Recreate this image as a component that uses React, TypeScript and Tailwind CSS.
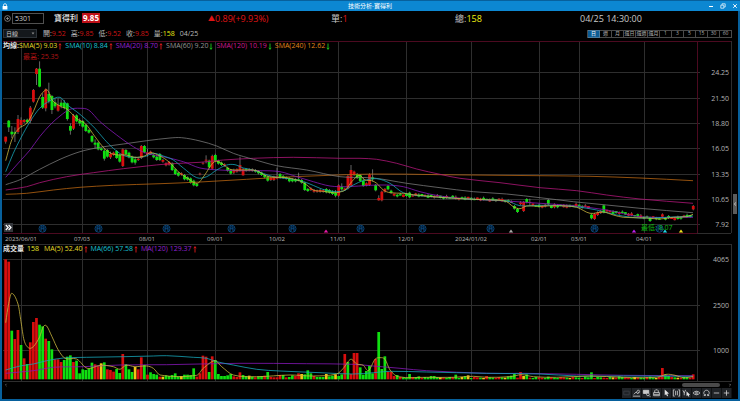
// App.tsx

import React from "react";

type Pt = [number, number];
// direction, body top, body bottom, high, low (chart units)
type Candle = ["r" | "g", number, number, number?, number?];

// one chart unit is a third of a pixel
const STEP = 9.25;
const COUNT = 224;
const PRICE_TOP = 40;
const VOLUME_TOP = 240;

const barX = (i: number) => (17 + STEP * i) / 3;

const GREEN = "#10e010";
const RED = "#d80e0e";
const YELLOW = "#f4c414";

const MONTHS = [
  { x: 21, label: "2023/06/01" },
  { x: 82, label: "07/03" },
  { x: 147, label: "08/01" },
  { x: 215, label: "09/01" },
  { x: 277, label: "10/02" },
  { x: 338, label: "11/01" },
  { x: 406, label: "12/01" },
  { x: 471, label: "2024/01/02" },
  { x: 539, label: "02/01" },
  { x: 579, label: "03/01" },
  { x: 644, label: "04/01" },
];

const PRICES = [
  { y: 72, label: "24.25" },
  { y: 98, label: "21.50" },
  { y: 123, label: "18.80" },
  { y: 148, label: "16.05" },
  { y: 174, label: "13.35" },
  { y: 199, label: "10.65" },
  { y: 224, label: "7.92" },
];

const VOLUMES = [
  { y: 259, label: "4065" },
  { y: 305, label: "2500" },
  { y: 350, label: "1000" },
];

const CANDLES: Candle[] = [
  ["r", 290, 305, 290, 311], ["g", 242, 262, 240, 276], ["g", 275, 283, 258, 294], ["g", 277, 281, 262, 306],
  ["r", 237, 276, 225, 282], ["r", 240, 255, 232, 262], ["r", 240, 246], ["g", 239, 247],
  ["r", 203, 243, 198, 250], ["r", 150, 185], ["r", 86, 102, 84, 135], ["g", 86, 140, 64, 142],
  ["g", 171, 203, 160, 207], ["r", 148, 205, 145, 214], ["g", 162, 184, 128, 190], ["g", 168, 210, 165, 222],
  ["g", 187, 199, 175, 205], ["r", 195, 212, 175, 215], ["g", 188, 198, 178, 205], ["g", 188, 204, 180, 208],
  ["g", 190, 237, 188, 242], ["g", 258, 272, 250, 284], ["r", 226, 266, 222, 270], ["g", 226, 244],
  ["g", 242, 250, 235, 258], ["g", 243, 260], ["g", 255, 273], ["g", 270, 278],
  ["g", 288, 305], ["g", 308, 314, 298, 326], ["g", 308, 328], ["g", 325, 330],
  ["g", 332, 356, 325, 362], ["g", 330, 350], ["r", 342, 352, 335, 357], ["r", 338, 344],
  ["g", 333, 354], ["g", 345, 365], ["r", 328, 378], ["g", 330, 343],
  ["g", 338, 352], ["g", 350, 367], ["g", 358, 368, 350, 374], ["r", 356, 360],
  ["r", 318, 354], ["g", 318, 337], ["r", 337, 343, 326, 350], ["r", 335, 342],
  ["g", 345, 352], ["g", 350, 360], ["g", 342, 360], ["r", 360, 365],
  ["r", 370, 376], ["r", 366, 374], ["g", 370, 390], ["g", 388, 402],
  ["g", 398, 407], ["r", 400, 404], ["g", 405, 418], ["g", 412, 419],
  ["g", 415, 428], ["g", 422, 436], ["g", 432, 438], ["r", 401, 403],
  ["r", 369, 371], ["r", 359, 362, 346, 370], ["g", 362, 382], ["r", 348, 386, 344, 388],
  ["g", 345, 363, 341, 364], ["g", 362, 371], ["g", 368, 375], ["r", 373, 377],
  ["g", 383, 392], ["g", 390, 401], ["r", 392, 398, 386, 402], ["r", 388, 395],
  ["r", 375, 392, 350, 395], ["r", 388, 406, 384, 407], ["g", 388, 392], ["r", 388, 391],
  ["r", 388, 392], ["g", 390, 395], ["g", 393, 400], ["g", 398, 405],
  ["g", 405, 412], ["g", 410, 422], ["r", 413, 420], ["r", 410, 420],
  ["r", 409, 416, 383, 418], ["g", 402, 413], ["g", 408, 414], ["g", 412, 416],
  ["g", 415, 424], ["g", 418, 424], ["g", 418, 424], ["g", 418, 422, 398, 424],
  ["g", 420, 428], ["g", 428, 450], ["g", 447, 453], ["r", 445, 450],
  ["r", 450, 455], ["r", 452, 455], ["r", 450, 455], ["r", 451, 455],
  ["g", 447, 457], ["g", 450, 458], ["g", 454, 462], ["g", 458, 467, 450, 472],
  ["r", 436, 467], ["g", 440, 448, 430, 452], ["r", 446, 450], ["r", 408, 445],
  ["r", 390, 437, 375, 440], ["r", 395, 405], ["g", 402, 414], ["g", 405, 423],
  ["g", 422, 438, 415, 440], ["r", 430, 436], ["r", 403, 435], ["g", 412, 418, 388, 424],
  ["g", 435, 451], ["r", 474, 481, 466, 482], ["r", 455, 481], ["r", 447, 455],
  ["g", 438, 448], ["g", 452, 458],
];

// quiet stretch: closes drift along this path with small bodies
const DRIFT: Pt[] = [
  [126, 464], [130, 467], [133, 465], [140, 470], [147, 474], [155, 478], [162, 481], [164, 486],
  [170, 490], [173, 499], [182, 498], [186, 497], [190, 502], [195, 514], [201, 520], [205, 528],
  [211, 535], [218, 535], [222, 526], [223, 522],
];

const SPECIAL: Record<number, Candle> = {
  131: ["g", 458, 472],
  165: ["g", 498, 506],
  166: ["g", 507, 516],
  168: ["r", 486, 513],
  169: ["g", 477, 487],
  170: ["r", 486, 488, 476, 496],
  176: ["g", 480, 493],
  178: ["r", 493, 502],
  190: ["g", 524, 535],
  191: ["r", 522, 537],
  192: ["r", 517, 525],
  193: ["r", 513, 519],
  194: ["g", 496, 518, 494, 520],
  209: ["g", 533, 543],
  213: ["r", 523, 530],
  215: ["g", 528, 534],
  223: ["r", 498, 508],
};

function lerp(points: Pt[], x: number) {
  for (let i = 1; i < points.length; i++) {
    const [x0, y0] = points[i - 1];
    const [x1, y1] = points[i];
    if (x <= x1) return y0 + ((y1 - y0) * (x - x0)) / (x1 - x0);
  }
  return points[points.length - 1][1];
}

const ALL_CANDLES: Candle[] = Array.from({ length: COUNT }, (_, i) => {
  if (SPECIAL[i]) return SPECIAL[i];
  if (CANDLES[i]) return CANDLES[i];
  const mid = lerp(DRIFT, i) + ((i * 7) % 5) - 2;
  const half = 2 + ((i * 3) % 4) / 2;
  return [(i * 5) % 7 < 3 ? "r" : "g", mid - half, mid + half, mid - half - (i % 3) * 2, mid + half + (i % 4)];
});

// colour and bar top (chart units, base at 418)
const VOLUME_HEAD =
  "r58 r65 g272 r297 r270 g315 r355 g372 r307 r246 r234 g254 g259 r296 g303 g328 " +
  "r358 r358 r366 g360 g350 g346 r366 g362 g400 g388 g390 g386 g368 r373 r378 y370 " +
  "g367 r388 r390 r395 g387 g399 r342 g372 g388 g396 y381 r388 r352 g375 r404 g397 " +
  "g402 g404 r410 y410 g406 g408 g405 g400 g409 y408 g404 g404 g405 g385 r410 r400 " +
  "r347 r350 g396 r349 g360 g402 g408 g408 g406 g402 r409 r411 r397 g405 g408 y407 " +
  "g410 r412 g409 g408 r407 g396 r411 r412 r412 r405 g405 r412 g411 g406 r408 r400 " +
  "y402 g403 g391 g400 r408 g411 g411 g411 y402 g409 g407 y403 g408 g403 r342 g366 " +
  "r402 r339 r339 g382 g404 g393 g377 g400 r357 g276 g387 g349 r395 r396 r408 g405 g410";

const VOLUME_SPECIAL: Record<number, string> = {
  131: "g402", 134: "g409", 138: "g408", 139: "g408", 146: "g404", 149: "g408", 150: "y406",
  156: "r408", 163: "g409", 164: "g407", 165: "g402", 167: "r396", 168: "y408", 169: "g403",
  176: "g410", 188: "g410", 190: "g397", 199: "g409", 209: "g410", 213: "r384", 214: "g403",
  215: "g408", 223: "r403",
};

const head = VOLUME_HEAD.split(" ");
const BARS = Array.from({ length: COUNT }, (_, i) => {
  const raw =
    VOLUME_SPECIAL[i] ??
    (i < 128 ? head[i] : undefined) ??
    `${"grgyrgr"[(i * 3) % 7]}${411 + ((i * 5) % 4)}`;
  return { color: raw[0], top: Number(raw.slice(1)) };
});

const PRICE_LINES: { color: string; points: Pt[] }[] = [
  {
    color: "#b86412",
    points: [[17, 463], [80, 460], [160, 450], [240, 442], [340, 436], [480, 431], [600, 426], [740, 418], [840, 412], [960, 407], [1120, 402], [1320, 404], [1620, 407], [1770, 409], [1920, 414], [2079, 422]],
  },
  {
    color: "#b01678",
    points: [[17, 450], [80, 440], [119, 428], [200, 410], [280, 398], [370, 386], [440, 378], [500, 372], [600, 367], [670, 360], [760, 355], [880, 352], [1020, 355], [1080, 355], [1130, 358], [1190, 370], [1250, 387], [1320, 403], [1380, 415], [1500, 428], [1620, 443], [1730, 452], [1820, 465], [1920, 477], [2079, 490]],
  },
  {
    color: "#777777",
    points: [[17, 434], [63, 418], [119, 388], [180, 358], [240, 335], [300, 322], [370, 312], [440, 302], [510, 294], [545, 293], [600, 303], [650, 318], [700, 340], [760, 358], [830, 377], [920, 390], [1020, 410], [1120, 414], [1220, 430], [1320, 443], [1420, 455], [1520, 462], [1620, 473], [1720, 485], [1820, 495], [1920, 505], [2079, 518]],
  },
  {
    color: "#8518b8",
    points: [[17, 412], [63, 360], [90, 330], [119, 290], [150, 255], [180, 228], [210, 208], [240, 205], [266, 210], [300, 245], [350, 285], [400, 320], [440, 340], [490, 350], [550, 365], [600, 384], [660, 390], [720, 392], [780, 392], [840, 395], [890, 410], [940, 425], [990, 438], [1040, 440], [1110, 436], [1160, 435], [1210, 440], [1260, 455], [1320, 468], [1420, 478], [1520, 483], [1620, 490], [1720, 497], [1820, 510], [1920, 530], [2079, 532]],
  },
  {
    color: "#16a4b8",
    points: [[17, 395], [40, 340], [63, 293], [90, 245], [119, 205], [150, 182], [180, 172], [202, 195], [230, 215], [257, 238], [285, 265], [313, 298], [340, 325], [368, 345], [395, 352], [433, 350], [460, 340], [490, 348], [520, 360], [550, 384], [590, 413], [620, 410], [650, 390], [680, 375], [705, 374], [730, 384], [760, 390], [820, 410], [880, 418], [920, 428], [960, 445], [990, 453], [1030, 453], [1060, 435], [1090, 422], [1130, 416], [1170, 430], [1210, 458], [1270, 468], [1420, 478], [1520, 483], [1560, 497], [1620, 496], [1680, 497], [1740, 502], [1790, 510], [1850, 525], [1920, 534], [2000, 532], [2079, 528]],
  },
  {
    color: "#c8b43c",
    points: [[17, 362], [35, 300], [54, 268], [82, 248], [100, 215], [119, 170], [137, 150], [146, 155], [156, 180], [180, 198], [202, 208], [229, 235], [257, 252], [285, 290], [313, 325], [340, 343], [378, 345], [405, 352], [433, 348], [452, 338], [480, 348], [507, 366], [535, 395], [563, 415], [592, 430], [612, 408], [642, 366], [665, 370], [690, 388], [730, 390], [770, 392], [800, 408], [830, 412], [860, 413], [900, 423], [920, 435], [940, 450], [970, 454], [1000, 458], [1020, 456], [1038, 448], [1055, 425], [1078, 406], [1095, 420], [1115, 422], [1130, 430], [1150, 450], [1170, 458], [1210, 460], [1240, 464], [1320, 472], [1420, 478], [1500, 481], [1520, 485], [1540, 500], [1560, 506], [1580, 498], [1620, 499], [1670, 497], [1730, 502], [1770, 520], [1810, 516], [1840, 525], [1870, 532], [1940, 534], [1980, 537], [2020, 532], [2060, 530], [2079, 523]],
  },
];

const VOLUME_LINES: { color: string; points: Pt[] }[] = [
  {
    color: "#8518b8",
    points: [[17, 400], [100, 392], [160, 382], [250, 380], [360, 375], [500, 374], [720, 370], [920, 371], [1060, 373], [1120, 378], [1200, 385], [1280, 392], [1460, 400], [1570, 400], [1730, 403], [1870, 406], [2079, 407]],
  },
  {
    color: "#16a4b8",
    points: [[17, 390], [60, 378], [100, 372], [140, 362], [190, 354], [260, 352], [370, 350], [460, 348], [500, 347], [580, 352], [620, 355], [650, 365], [700, 375], [770, 388], [840, 393], [960, 398], [1060, 402], [1120, 398], [1170, 394], [1280, 396], [1460, 400], [1620, 402], [1730, 408], [1870, 408], [2079, 409]],
  },
  {
    color: "#c8b43c",
    points: [[17, 248], [26, 190], [35, 160], [54, 192], [63, 245], [72, 300], [85, 323], [100, 320], [119, 290], [130, 260], [140, 258], [156, 290], [175, 330], [195, 355], [230, 357], [262, 385], [300, 376], [340, 380], [360, 388], [378, 376], [405, 380], [440, 378], [460, 385], [480, 405], [590, 406], [610, 385], [645, 362], [665, 380], [700, 405], [770, 410], [870, 405], [940, 408], [1010, 402], [1030, 385], [1052, 358], [1070, 372], [1090, 376], [1105, 392], [1125, 358], [1140, 353], [1155, 358], [1170, 390], [1195, 410], [1280, 412], [1360, 412], [1420, 409], [1460, 412], [1530, 410], [1565, 404], [1600, 410], [1670, 412], [1770, 408], [1870, 412], [1970, 412], [2000, 403], [2025, 406], [2050, 413], [2079, 410]],
  },
];

// smooth curve through all points
function curve(points: Pt[], top: number) {
  const p = points.map(([x, y]): Pt => [x / 3, top + y / 3]);
  let d = `M${p[0][0].toFixed(1)} ${p[0][1].toFixed(1)}`;
  for (let i = 0; i < p.length - 1; i++) {
    const a = p[i - 1] ?? p[i];
    const b = p[i];
    const c = p[i + 1];
    const e = p[i + 2] ?? c;
    const dx = (c[0] - b[0]) / 3;
    const s1 = c[0] === a[0] ? 0 : (c[1] - a[1]) / (c[0] - a[0]);
    const s2 = e[0] === b[0] ? 0 : (e[1] - b[1]) / (e[0] - b[0]);
    d += `C${(b[0] + dx).toFixed(1)} ${(b[1] + s1 * dx).toFixed(1)} ${(c[0] - dx).toFixed(1)} ${(
      c[1] - s2 * dx
    ).toFixed(1)} ${c[0].toFixed(1)} ${c[1].toFixed(1)}`;
  }
  return d;
}

function Lines({ lines, top }: { lines: { color: string; points: Pt[] }[]; top: number }) {
  return (
    <g fill="none" strokeWidth="0.8">
      {lines.map((l) => (
        <path key={l.color} d={curve(l.points, top)} stroke={l.color} />
      ))}
    </g>
  );
}

const MARKS = [42, 98, 166, 231, 292, 360, 422, 490, 594, 659];
const TRIANGLES = [
  { x: 326, color: "#e818a8" },
  { x: 511, color: "#aaaaaa" },
  { x: 634, color: "#c020f0" },
  { x: 665, color: "#20d8e8" },
  { x: 681, color: "#f0e020" },
];

function PriceChart() {
  return (
    <svg viewBox="2 40 736 204" className="block w-full" role="img" aria-label="寶得利 日線">
      <g stroke="#2e2e2e" shapeRendering="crispEdges">
        {PRICES.map((p) => (
          <path key={p.y} d={`M3 ${p.y + 0.5}H700`} />
        ))}
        {MONTHS.map((m) => (
          <path key={m.x} d={`M${m.x + 0.5} 41V233`} />
        ))}
        <path d="M731.5 41V233" />
        <path d="M697 233.5H731" />
      </g>
      <g stroke="#4c0a20" shapeRendering="crispEdges">
        <path d="M3 41.5H731M3 233.5H697M697.5 41V233" />
      </g>

      <g fill="none" stroke="#0b5596">
        {MARKS.map((x) => (
          <g key={x}>
            <circle cx={x + 0.5} cy="228.7" r="3.5" strokeWidth="0.8" />
            <path d={`M${x - 1} 231V226.9H${x + 2}V231M${x - 1} 228.8H${x + 2}`} strokeWidth="0.9" />
          </g>
        ))}
      </g>
      {TRIANGLES.map((t) => (
        <path key={t.x} d={`M${t.x} 229.5l2.2 3h-4.4z`} fill={t.color} />
      ))}

      {ALL_CANDLES.map(([dir, top, bottom, high, low], i) => {
        const x = barX(i);
        return (
          <g key={i}>
            <path
              d={`M${x} ${PRICE_TOP + (high ?? top - 3) / 3}V${PRICE_TOP + (low ?? bottom + 3) / 3}`}
              stroke="#909090"
              strokeWidth="0.7"
            />
            <rect
              x={x - 1.4}
              y={PRICE_TOP + top / 3}
              width="2.8"
              height={(bottom - top) / 3}
              fill={dir === "r" ? RED : GREEN}
            />
          </g>
        );
      })}
      <Lines lines={PRICE_LINES} top={PRICE_TOP} />

      <text x="23" y="59" className="fill-[#b01414] text-[7px]">
        最高: 25.35
      </text>
      <text x="641" y="230" className="fill-[#10b810] text-[7px]">
        最低: 8.07
      </text>
      {MONTHS.map((m) => (
        <text key={m.x} x={m.x} y="241" textAnchor="middle" className="fill-[#bcbcbc] text-[6px]">
          {m.label}
        </text>
      ))}
      {PRICES.map((p) => (
        <text key={p.y} x="729" y={p.y + 3} textAnchor="end" className="fill-[#b4b4b4] text-[7px]">
          {p.label}
        </text>
      ))}
    </svg>
  );
}

function VolumeChart() {
  const fills: Record<string, string> = { r: RED, g: GREEN, y: YELLOW };
  return (
    <svg viewBox="2 244 736 138" className="block w-full" role="img" aria-label="成交量">
      <g stroke="#2e2e2e" shapeRendering="crispEdges">
        <path d="M3 244.5H731M3 381.5H731M731.5 244V382M697.5 244V382" />
        {VOLUMES.map((v) => (
          <path key={v.y} d={`M3 ${v.y + 0.5}H700`} />
        ))}
        {MONTHS.map((m) => (
          <path key={m.x} d={`M${m.x + 0.5} 245V381`} />
        ))}
      </g>
      {BARS.map((b, i) => (
        <rect
          key={i}
          x={barX(i) - 1.4}
          y={VOLUME_TOP + b.top / 3}
          width="2.7"
          height={(418 - b.top) / 3}
          fill={fills[b.color]}
        />
      ))}
      <Lines lines={VOLUME_LINES} top={VOLUME_TOP} />
      {VOLUMES.map((v) => (
        <text key={v.y} x="729" y={v.y + 3} textAnchor="end" className="fill-[#b4b4b4] text-[7px]">
          {v.label}
        </text>
      ))}
    </svg>
  );
}

function Arrow({ up }: { up?: boolean }) {
  return (
    <svg viewBox="0 0 4 7" className="mr-[2px] ml-px h-[7px] w-[4px] shrink-0">
      <path
        d={up ? "M2 0.5V6.5M0.8 2.2L2 0.8L3.2 2.2" : "M2 0.5V6.5M0.8 4.8L2 6.2L3.2 4.8"}
        fill="none"
        stroke={up ? "#d01818" : "#18b818"}
        strokeWidth="1"
      />
    </svg>
  );
}

function Legend({ color, text, up }: { color: string; text: string; up?: boolean }) {
  return (
    <span className="flex items-center">
      <span className={color}>{text}</span>
      <Arrow up={up} />
    </span>
  );
}

function Quote({ name, value, color = "text-[#cc1414]" }: { name: string; value: string; color?: string }) {
  return (
    <span className="text-[#b8b8b8]">
      {name}:<span className={color}>{value}</span>
    </span>
  );
}

const PERIODS = ["日", "週", "月", "還日", "還週", "還月", "1", "3", "5", "15", "30", "60"];

const TOOLS: { name: string; icon: React.ReactNode }[] = [
  { name: "空白", icon: <path d="M2 3h6v4h-6z" stroke="#3c4046" /> },
  { name: "畫線", icon: <path d="M1 8.5h8M2 6.5L4.5 4L6 5.5L8.5 4.5M4.5 4.5L7 1.5L8.5 3L6 5.5" /> },
  {
    name: "視窗",
    icon: (
      <>
        <path d="M1.5 2h6v3.5h-6z" fill="#c8c8c8" />
        <circle cx="6.6" cy="6.6" r="1.5" fill="#202327" />
        <path d="M9.2 9.2L7.8 7.8" />
      </>
    ),
  },
  { name: "列印", icon: <path d="M3 4.5V2.5L4 1.5H6L7 2.5V4.5M1.8 4.5h6.4v3.5h-6.4zM2 6.5h6" /> },
  { name: "游標", icon: <path d="M3 1L7.8 5.5L5.8 5.8L6.8 8.2L5.6 8.7L4.6 6.4L3 7.5z" fill="#e0e0e0" stroke="none" /> },
  { name: "區間", icon: <path d="M3 1.5H1.5V8.5H3M7 1.5H8.5V8.5H7M4 2.5V7.5M6 2.5V7.5" /> },
  {
    name: "查價",
    icon: (
      <>
        <path d="M1 2L2.5 5L4 1.5M2.5 5V7.5" />
        <path d="M5 3L9 7L7.6 7.2L8.2 8.8L7 9L6.4 7.6L5 8.4z" fill="#e0e0e0" stroke="none" />
      </>
    ),
  },
  {
    name: "顯示",
    icon: (
      <>
        <path d="M1.2 5Q5 1 8.8 5Q5 9 1.2 5z" />
        <circle cx="5" cy="5" r="1" />
      </>
    ),
  },
  { name: "重設", icon: <path d="M3.6 7.6A3 3 0 1 1 6.4 7.6M2 7.8H3.8V6.2M8 7.8H6.2V6.2" /> },
  { name: "縮小", icon: <path d="M2 5H8" /> },
  { name: "放大", icon: <path d="M2 5H8M5 2V8" /> },
];

function TitleBar() {
  return (
    <header className="flex h-[11px] items-center border-t border-[#07609c] bg-[#0c87d2] px-[2px] text-white">
      <div className="flex flex-1 items-center">
        <svg viewBox="0 0 6 7" className="h-[7px] w-[6px]">
          <path d="M1.5 3.2V2.2A1.5 1.5 0 0 1 4.5 2.2V3.2" fill="none" stroke="#fff" strokeWidth="0.8" />
          <rect x="0.6" y="3" width="4.8" height="3.5" fill="#fff" />
        </svg>
      </div>
      <h1 className="text-[6px] leading-none">技術分析-寶得利</h1>
      <div className="flex flex-1 justify-end gap-[6px]">
        <button aria-label="最小化">
          <svg viewBox="0 0 6 6" className="h-[6px] w-[6px]">
            <path d="M1 3.5H5" stroke="#fff" />
          </svg>
        </button>
        <button aria-label="還原">
          <svg viewBox="0 0 6 6" className="h-[6px] w-[6px]" fill="none" stroke="#fff" strokeWidth="0.7">
            <path d="M0.8 2.2h3v3h-3zM2 2V0.8H5.2V4H4" />
          </svg>
        </button>
        <button aria-label="關閉">
          <svg viewBox="0 0 6 6" className="h-[6px] w-[6px]">
            <path d="M1.2 1.2L4.8 4.8M4.8 1.2L1.2 4.8" stroke="#fff" strokeWidth="0.9" />
          </svg>
        </button>
      </div>
    </header>
  );
}

function QuoteBar() {
  return (
    <div className="grid h-[14px] grid-cols-[206fr_123fr_124fr_125fr_158fr] items-center text-[9px] leading-none whitespace-nowrap text-[#c8c8c8]">
      <div className="flex items-center pl-[2px]">
        <button aria-label="新增">
          <svg viewBox="0 0 7 7" className="block h-[7px] w-[7px]" fill="none" stroke="#a0a0a0" strokeWidth="0.7">
            <circle cx="3.5" cy="3.5" r="2.9" />
            <path d="M2 3.5H5M3.5 2V5" />
          </svg>
        </button>
        <input
          aria-label="股票代號"
          defaultValue="5301"
          className="ml-px h-[11px] w-8 border border-[#505050] bg-black px-[2px] text-[7px] leading-none text-[#d0d0d0]"
        />
        <span className="ml-[10px] text-[8px] font-medium text-[#e0e0e0]">寶得利</span>
        <span className="ml-1 bg-[#c01018] px-px py-px text-[8px] font-bold text-white">9.85</span>
      </div>
      <span className="flex items-center text-[#e01414]">
        <span className="text-[7px]">▲</span>
        0.89(+9.93%)
      </span>
      <span>
        單:<span className="text-[#e01414]">1</span>
      </span>
      <span>
        總:<span className="font-medium text-[#f0f010]">158</span>
      </span>
      <time>04/25 14:30:00</time>
    </div>
  );
}

function PeriodBar() {
  return (
    <div className="flex h-[15px] items-center pt-[2px] pr-[6px] pl-px text-[7px] leading-none whitespace-nowrap">
      <div className="relative flex">
        <select
          aria-label="週期"
          className="h-[9px] w-[34px] appearance-none border border-[#2c3238] bg-[#14181c] px-[2px] text-[6px] leading-none text-[#c8c8c8]"
        >
          <option>日線</option>
        </select>
        <svg viewBox="0 0 4 3" className="pointer-events-none absolute top-[3px] right-[2px] h-[3px] w-[4px]">
          <path d="M0.6 0.6H3.4L2 2.4z" fill="#8c8c8c" />
        </svg>
      </div>
      <div className="ml-[6px] flex gap-[5px]">
        <Quote name="開" value="9.52" />
        <Quote name="高" value="9.85" />
        <Quote name="低" value="9.52" />
        <Quote name="收" value="9.85" />
        <Quote name="量" value="158" color="text-[#e8e810]" />
        <span className="text-[#b8b8b8]">04/25</span>
      </div>
      <div className="ml-auto flex border-l border-[#4a4a4a]">
        {PERIODS.map((p, i) => (
          <button
            key={p}
            className={
              i === 0
                ? "h-2 w-3 border-y border-r border-[#4a7a9c] bg-[#0c5c94] text-[5px] leading-none text-white"
                : "h-2 w-3 border-y border-r border-[#4a4a4a] text-[5px] leading-none text-[#b0b0b0]"
            }
          >
            {p}
          </button>
        ))}
      </div>
    </div>
  );
}

export default function App() {
  return (
    <div className="flex min-h-screen flex-col bg-black font-['Open_Sans','Noto_Sans_CJK_TC',sans-serif]">
      <TitleBar />
      <main className="flex-1 border-x-2 border-b-2 border-[#07609c]">
        <QuoteBar />
        <PeriodBar />

        <section className="relative">
          <PriceChart />
          <div className="absolute top-[2px] left-px flex gap-px text-[7px] leading-[8px] whitespace-nowrap">
            <span className="flex">
              <span className="font-bold text-[#e0e0e0]">均線:</span>
              <Legend color="text-[#e4dc28]" text="SMA(5) 9.03" up />
            </span>
            <Legend color="text-[#18c4d4]" text="SMA(10) 8.84" up />
            <Legend color="text-[#9420d0]" text="SMA(20) 8.70" up />
            <Legend color="text-[#949494]" text="SMA(60) 9.20" />
            <Legend color="text-[#d01890]" text="SMA(120) 10.19" />
            <Legend color="text-[#e08418]" text="SMA(240) 12.62" />
          </div>
          <button
            aria-label="展開"
            className="absolute bottom-3 left-[2px] flex h-[9px] w-[9px] items-center justify-center bg-[#34373c]"
          >
            <svg viewBox="0 0 7 7" className="h-[7px] w-[7px]" fill="none" stroke="#fff" strokeWidth="1.2">
              <path d="M0.8 1L3.2 3.5L0.8 6M3.6 1L6 3.5L3.6 6" />
            </svg>
          </button>
          <button
            aria-label="側欄"
            className="absolute right-px bottom-[30px] flex h-5 w-1 items-center justify-center bg-[#5c5c5c]"
          >
            <svg viewBox="0 0 4 6" className="h-[6px] w-[4px]" fill="none" stroke="#ddd" strokeWidth="0.8">
              <path d="M3 1.5L1.3 3L3 4.5" />
            </svg>
          </button>
        </section>

        <section className="relative">
          <VolumeChart />
          <div className="absolute top-px left-px flex gap-px text-[7px] leading-[8px] whitespace-nowrap">
            <span className="mr-[2px] font-bold text-[#e0e0e0]">成交量</span>
            <span className="mr-1 text-[#e8e828]">158</span>
            <Legend color="text-[#e4dc28]" text="MA(5) 52.40" up />
            <Legend color="text-[#18c4d4]" text="MA(66) 57.58" up />
            <Legend color="text-[#9420d0]" text="MA(120) 129.37" up />
          </div>
        </section>

        <div className="flex h-[6px] items-center justify-between pr-[6px] pl-[2px]">
          <button aria-label="向左" className="block">
            <svg viewBox="0 0 4 4" className="block h-[4px] w-[4px]" fill="none" stroke="#888" strokeWidth="0.6">
              <path d="M2.6 0.8L1.4 2L2.6 3.2" />
            </svg>
          </button>
          <div className="ml-auto h-1 w-[38px] rounded-full bg-[#4a4a4a]" />
          <button aria-label="向右" className="ml-2 block">
            <svg viewBox="0 0 4 4" className="block h-[4px] w-[4px]" fill="none" stroke="#aaa" strokeWidth="0.6">
              <path d="M1.4 0.8L2.6 2L1.4 3.2" />
            </svg>
          </button>
        </div>
        <div className="flex justify-end pr-[6px]">
          <div className="flex bg-[#202327]">
            {TOOLS.map((t) => (
              <button key={t.name} aria-label={t.name} className="h-[10px] w-[10px] border-r border-[#101214]">
                <svg viewBox="0 0 10 10" className="block h-full w-full" fill="none" stroke="#d0d0d0" strokeWidth="0.9">
                  {t.icon}
                </svg>
              </button>
            ))}
          </div>
        </div>
      </main>
    </div>
  );
}
